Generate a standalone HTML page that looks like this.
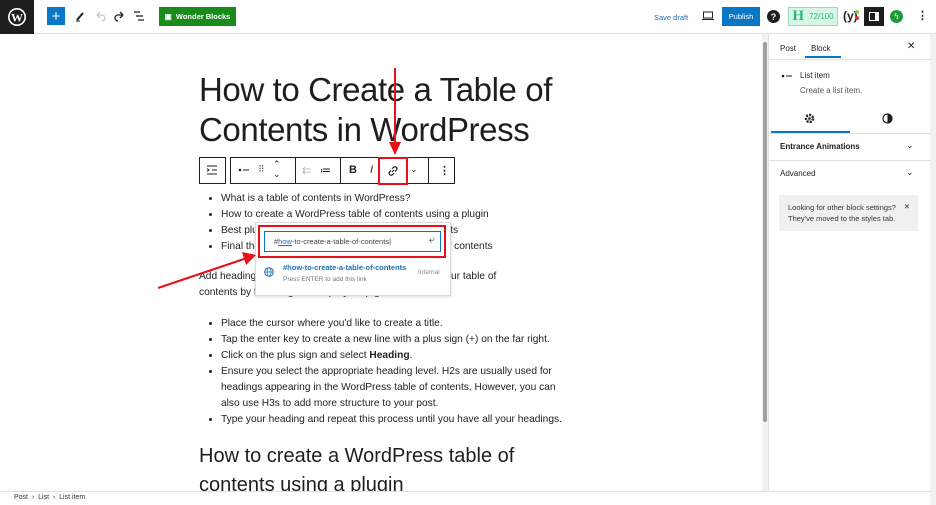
<!DOCTYPE html>
<html><head><meta charset="utf-8"><style>
*{box-sizing:border-box;margin:0;padding:0}
body{width:936px;height:505px;overflow:hidden;background:#fff;font-family:"Liberation Sans",sans-serif;color:#1e1e1e;position:relative}
.abs{position:absolute}
.top{left:0;top:0;width:936px;height:34px;border-bottom:1px solid #e0e0e0;background:#fff}
.btn{position:absolute;display:flex;align-items:center;justify-content:center}
h1{position:absolute;left:199px;top:70px;font-weight:400;font-size:33px;letter-spacing:-0.4px;line-height:40px;width:400px}
.txt{position:absolute;left:199px;font-size:10.2px;line-height:16px;color:#222}
ul{list-style:disc;padding-left:22px}
.tb{position:absolute;top:157px;height:27px;border:1px solid #1e1e1e;background:#fff}
.sep{position:absolute;top:157px;width:1px;height:27px;background:#1e1e1e}
.ic{position:absolute;top:164px;font-size:11px}
.side{position:absolute;left:768px;top:34px;width:162px;height:457px;border-left:1px solid #e0e0e0;font-size:8px}
</style></head><body>
<div class="abs top"></div>
<div class="btn" style="left:0;top:0;width:34px;height:34px;background:#1e1e1e"><svg width="20" height="20" viewBox="0 0 20 20"><circle cx="10" cy="10" r="9" fill="#fff"/><circle cx="10" cy="10" r="7.4" fill="#1e1e1e"/><text x="10" y="14.5" font-size="12" font-weight="bold" fill="#fff" text-anchor="middle" font-family="Liberation Serif">W</text></svg></div>
<div class="btn" style="left:47px;top:7px;width:18px;height:18px;background:#0a77c6;color:#fff;font-size:15px">+</div>
<svg class="abs" style="left:74px;top:10px" width="12" height="12"><path d="M3 10 L9 3" stroke="#1e1e1e" stroke-width="2"/><path d="M2 11h4" stroke="#1e1e1e"/></svg>
<svg class="abs" style="left:94px;top:10px" width="12" height="12"><path d="M3 5h5a3 3 0 0 1 0 6M3 5l3-3M3 5l3 3" stroke="#bbb" fill="none"/></svg>
<svg class="abs" style="left:113px;top:10px" width="12" height="12"><path d="M10 5H5a3 3 0 0 0 0 6M10 5L7 2M10 5L7 8" stroke="#1e1e1e" fill="none" stroke-width="1.3"/></svg>
<svg class="abs" style="left:133px;top:11px" width="12" height="10"><path d="M1 1h6M3 5h7M5 9h6" stroke="#1e1e1e" stroke-width="1.3"/></svg>
<div class="btn" style="left:159px;top:7px;width:77px;height:19px;background:#1a8b1a;color:#fff;font-size:7.5px;font-weight:bold">▣&nbsp; Wonder Blocks</div>
<div class="abs" style="left:654px;top:13px;font-size:7.5px;color:#2271b1">Save draft</div>
<svg class="abs" style="left:702px;top:11px" width="12" height="10"><rect x="1.5" y="1" width="9" height="6" fill="none" stroke="#1e1e1e"/><path d="M0 8.5h12" stroke="#1e1e1e"/></svg>
<div class="btn" style="left:722px;top:7px;width:38px;height:19px;background:#0a77c6;color:#fff;font-size:7.5px">Publish</div>
<div class="btn" style="left:767px;top:10px;width:13px;height:13px;border-radius:50%;background:#1e1e1e;color:#fff;font-size:9px;font-weight:bold">?</div>
<div class="btn" style="left:788px;top:7px;width:50px;height:19px;background:#d8f6e6;border:1px solid #8fe0b6;font-size:8px;color:#2eb872"><b style="font-family:'Liberation Serif';font-size:15px;margin-right:5px">H</b>72/100</div>
<div class="abs" style="left:843px;top:9px;font-size:12px;font-weight:bold">(y)</div><div class="abs" style="left:855px;top:10px;width:4px;height:4px;background:#7ad03a;border-radius:50%"></div><div class="abs" style="left:855px;top:16px;width:4px;height:4px;background:#dc3232;border-radius:50%"></div>
<div class="btn" style="left:864px;top:7px;width:20px;height:19px;background:#1e1e1e"><div style="width:10px;height:9px;border:1.3px solid #fff;border-right-width:4px"></div></div>
<div class="btn" style="left:890px;top:10px;width:13px;height:13px;border-radius:50%;background:#1e9b3a;color:#fff;font-size:8px">ϟ</div>
<div class="abs" style="left:917px;top:9px;font-size:11px;font-weight:bold">⋮</div>

<h1>How to Create a Table of Contents in WordPress</h1>

<div class="tb" style="left:199px;width:27px"></div>
<svg class="abs" style="left:206px;top:165px" width="12" height="11"><path d="M1 1h10M6 5h5M1 9h10M1 3.5l2 1.5-2 1.5" stroke="#1e1e1e" fill="none"/></svg>
<div class="tb" style="left:230px;width:225px"></div>
<div class="sep" style="left:295px"></div><div class="sep" style="left:340px"></div><div class="sep" style="left:428px"></div>
<svg class="abs" style="left:238px;top:167px" width="12" height="6"><circle cx="2" cy="3" r="1.3" fill="#1e1e1e"/><path d="M5 3h6" stroke="#1e1e1e"/></svg>
<div class="ic" style="left:258px;font-size:9px;color:#555">⠿</div>
<div class="ic" style="left:273px;top:159px;font-size:9px;line-height:10px">⌃<br>⌄</div>
<div class="ic" style="left:302px;color:#bbb">⇇</div>
<div class="ic" style="left:320px">≔</div>
<div class="ic" style="left:349px;font-weight:bold">B</div>
<div class="ic" style="left:370px;font-style:italic">I</div>
<div class="abs" style="left:378px;top:157px;width:30px;height:28px;border:2px solid #e8101a"></div>
<svg class="abs" style="left:387px;top:165px" width="12" height="12"><path d="M5 7l2-2M4 5.5L2.5 7a2 2 0 0 0 2.8 2.8L7 8.3M8 6.5l1.5-1.5a2 2 0 0 0-2.8-2.8L5 3.7" stroke="#1e1e1e" fill="none" stroke-width="1.2"/></svg>
<div class="ic" style="left:410px;font-size:9px">⌄</div>
<div class="ic" style="left:439px;font-weight:bold">⋮</div>

<div class="txt" style="top:191px"><ul><li>What is a table of contents in WordPress?</li><li>How to create a WordPress table of contents using a plugin</li><li>Best plugins to create a WordPress table of contents</li><li>Final thoughts: How to create a WordPress table of contents</li></ul></div>
<div class="txt" style="top:269px;width:330px">Add headings to your post that you want to display in your table of contents by following this step-by-step guide:</div>
<div class="txt" style="top:316px;width:375px"><ul><li>Place the cursor where you'd like to create a title.</li><li>Tap the enter key to create a new line with a plus sign (+) on the far right.</li><li>Click on the plus sign and select <b>Heading</b>.</li><li>Ensure you select the appropriate heading level. H2s are usually used for headings appearing in the WordPress table of contents. However, you can also use H3s to add more structure to your post.</li><li>Type your heading and repeat this process until you have all your headings.</li></ul></div>
<div class="abs" style="left:199px;top:442px;font-size:20px;line-height:29px;width:340px">How to create a WordPress table of contents using a plugin</div>

<div class="abs" style="left:255px;top:222px;width:196px;height:74px;background:#fff;border:1px solid #ddd;box-shadow:0 1px 3px rgba(0,0,0,.15)"></div>
<div class="abs" style="left:264px;top:231px;width:177px;height:21px;border:1px solid #0a77c6;font-size:7.5px;color:#444;padding:5px 0 0 9px">#<u style="color:#2271b1">how</u>-to-create-a-table-of-contents|<span style="position:absolute;right:5px;top:2px;font-size:11px">⤶</span></div>
<div class="abs" style="left:258px;top:225px;width:188px;height:33px;border:2px solid #e8101a"></div>
<svg class="abs" style="left:264px;top:267px" width="10" height="10"><circle cx="5" cy="5" r="4.3" fill="none" stroke="#2271b1"/><ellipse cx="5" cy="5" rx="2" ry="4.3" fill="none" stroke="#2271b1" stroke-width=".8"/><path d="M1 5h8" stroke="#2271b1" stroke-width=".8"/></svg>
<div class="abs" style="left:283px;top:263px;font-size:7.5px;color:#2271b1;font-weight:bold">#how-to-create-a-table-of-contents</div>
<div class="abs" style="left:283px;top:276px;font-size:6.5px;color:#777">Press ENTER to add this link</div>
<div class="abs" style="left:418px;top:269px;font-size:6.5px;color:#888">Internal</div>

<svg class="abs" style="left:0;top:0" width="768" height="505"><path d="M395 68V148" stroke="#e8101a" stroke-width="2"/><path d="M389 142l6 13 6-13z" fill="#e8101a"/><path d="M158 288L247 258" stroke="#e8101a" stroke-width="2"/><path d="M242 252l14 3-10 10z" fill="#e8101a"/></svg>

<div class="abs" style="left:762px;top:34px;width:6px;height:457px;background:#f1f1f1"></div>
<div class="abs" style="left:763px;top:42px;width:4px;height:380px;background:#a0a0a0;border-radius:2px"></div>
<div class="abs" style="left:930px;top:34px;width:6px;height:471px;background:#f1f1f1"></div>

<div class="side">
<div class="abs" style="left:11px;top:10px">Post</div>
<div class="abs" style="left:42px;top:10px">Block</div>
<div class="abs" style="left:36px;top:22px;width:36px;height:2px;background:#0a77c6"></div>
<div class="abs" style="left:138px;top:7px;font-size:10px">✕</div>
<div class="abs" style="left:0;top:25px;width:161px;height:1px;background:#e0e0e0"></div>
<svg class="abs" style="left:12px;top:39px" width="12" height="6"><circle cx="2" cy="3" r="1.3" fill="#1e1e1e"/><path d="M5 3h6" stroke="#1e1e1e"/></svg>
<div class="abs" style="left:31px;top:37px">List item</div>
<div class="abs" style="left:31px;top:52px;color:#555">Create a list item.</div>
<svg class="abs" style="left:35px;top:79px" width="11" height="11"><circle cx="5.5" cy="5.5" r="3.5" fill="none" stroke="#1e1e1e" stroke-width="2.5" stroke-dasharray="2 1.2"/><circle cx="5.5" cy="5.5" r="1.3" fill="#1e1e1e"/></svg>
<svg class="abs" style="left:113px;top:79px" width="11" height="11"><circle cx="5.5" cy="5.5" r="4.5" fill="none" stroke="#1e1e1e" stroke-width="1.2"/><path d="M5.5 1a4.5 4.5 0 0 1 0 9z" fill="#1e1e1e"/></svg>
<div class="abs" style="left:2px;top:97px;width:79px;height:2px;background:#0a77c6"></div>
<div class="abs" style="left:0;top:99px;width:161px;height:1px;background:#e0e0e0"></div>
<div class="abs" style="left:11px;top:108px;font-weight:bold">Entrance Animations</div>
<div class="abs" style="left:137px;top:106px;font-size:9px">⌄</div>
<div class="abs" style="left:0;top:126px;width:161px;height:1px;background:#e0e0e0"></div>
<div class="abs" style="left:11px;top:135px">Advanced</div>
<div class="abs" style="left:137px;top:133px;font-size:9px">⌄</div>
<div class="abs" style="left:10px;top:161px;width:139px;height:36px;background:#f0f0f0;padding:7px 9px;line-height:11px;color:#333;font-size:7.5px">Looking for other block settings?<br>They've moved to the styles tab.<span style="position:absolute;right:8px;top:6px">✕</span></div>
</div>

<div class="abs" style="left:0;top:491px;width:930px;height:14px;border-top:1px solid #e0e0e0;background:#fff;font-size:7px;color:#333;padding:2px 0 0 14px">Post &nbsp;›&nbsp; List &nbsp;›&nbsp; List item</div>
</body></html>
